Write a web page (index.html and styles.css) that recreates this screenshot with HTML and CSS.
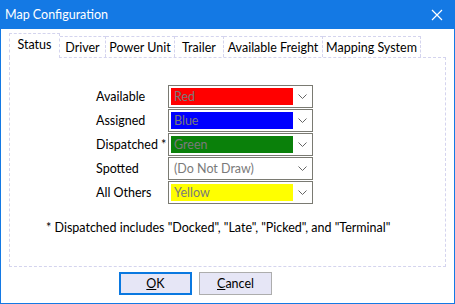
FILE: index.html
```html
<!DOCTYPE html>
<html lang="en">
<head>
    <meta charset="UTF-8">
    <title>Map Configuration</title>
    <link rel="stylesheet" href="styles.css">
</head>
<body>

<div class="window">
    <div class="titlebar">
        <span class="title">Map Configuration</span>
        <span class="close">
            <svg width="12" height="12" viewBox="0 0 12 12"><path d="M1 1 L11 11 M11 1 L1 11" stroke="#fff" stroke-width="1.2" fill="none"/></svg>
        </span>
    </div>

    <div class="client">
        <div class="tabs">
            <div class="tab selected tab-status">Status</div>
            <div class="tab tab-driver">Driver</div>
            <div class="tab tab-power">Power Unit</div>
            <div class="tab tab-trailer">Trailer</div>
            <div class="tab tab-freight">Available Freight</div>
            <div class="tab tab-mapping">Mapping System</div>
        </div>

        <div class="panel">
            <div class="form-grid">
                <label>Available</label>
                <div class="combo"><span class="value red">Red</span><span class="arrow"><svg width="9" height="5" viewBox="0 0 9 5"><path d="M0.5 0.5 L4.5 4.5 L8.5 0.5" stroke="#666" fill="none"/></svg></span></div>

                <label>Assigned</label>
                <div class="combo"><span class="value blue">Blue</span><span class="arrow"><svg width="9" height="5" viewBox="0 0 9 5"><path d="M0.5 0.5 L4.5 4.5 L8.5 0.5" stroke="#666" fill="none"/></svg></span></div>

                <label>Dispatched *</label>
                <div class="combo"><span class="value green">Green</span><span class="arrow"><svg width="9" height="5" viewBox="0 0 9 5"><path d="M0.5 0.5 L4.5 4.5 L8.5 0.5" stroke="#666" fill="none"/></svg></span></div>

                <label>Spotted</label>
                <div class="combo"><span class="value">(Do Not Draw)</span><span class="arrow"><svg width="9" height="5" viewBox="0 0 9 5"><path d="M0.5 0.5 L4.5 4.5 L8.5 0.5" stroke="#666" fill="none"/></svg></span></div>

                <label>All Others</label>
                <div class="combo"><span class="value yellow">Yellow</span><span class="arrow"><svg width="9" height="5" viewBox="0 0 9 5"><path d="M0.5 0.5 L4.5 4.5 L8.5 0.5" stroke="#666" fill="none"/></svg></span></div>
            </div>

            <p class="note">* Dispatched includes "Docked", "Late", "Picked", and "Terminal"</p>
        </div>

        <div class="buttons">
            <button class="btn default"><u>O</u>K</button>
            <button class="btn"><u>C</u>ancel</button>
        </div>
    </div>
</div>

</body>
</html>
```

FILE: styles.css
```css
body {
    margin: 0;
    padding: 0;
    font-family: 'Lato', 'Noto Sans', sans-serif;
    font-size: 12.5px;
    color: #000;
    background: #fff;
}

.window {
    width: 455px;
    height: 304px;
    box-sizing: border-box;
    background-color: #1479e4;
    padding: 0 1px 1px 1px;
    display: flex;
    flex-direction: column;
}

.titlebar {
    height: 29px;
    display: flex;
    align-items: center;
    justify-content: space-between;
    color: #fff;
    padding-left: 4px;
}

.title {
    font-size: 12.5px;
    margin-top: -1px;
}

.close {
    width: 34px;
    display: flex;
    justify-content: center;
    padding-top: 1px;
}

.client {
    flex: 1;
    background: #fff;
    padding: 4px 8px 0 8px;
}

/* Tabs */
.tabs {
    display: flex;
    align-items: flex-end;
    height: 24px;
    position: relative;
    z-index: 1;
}

.tab {
    box-sizing: border-box;
    height: 21px;
    border: 1px dashed #d4d4ee;
    border-bottom: none;
    border-left: none;
    text-align: center;
    line-height: 21px;
    background: #fff;
    white-space: nowrap;
}

.tab.selected {
    height: 25px;
    border-left: 1px dashed #d4d4ee;
    line-height: 21px;
    margin-bottom: -1px;
}

.tab-status { width: 51px; }
.tab-driver { width: 46px; }
.tab-power { width: 69px; }
.tab-trailer { width: 49px; }
.tab-freight { width: 99px; }
.tab-mapping { width: 98px; }

.panel {
    box-sizing: border-box;
    width: 437px;
    height: 210px;
    border: 1px dashed #d4d4ee;
    padding: 27px 0 0 37px;
}

.form-grid {
    display: grid;
    grid-template-columns: 49px 72px 145px;
    grid-auto-rows: 23px;
    row-gap: 1px;
}

.form-grid label {
    grid-column: 2;
    display: flex;
    align-items: center;
    white-space: nowrap;
}

.combo {
    grid-column: 3;
    box-sizing: border-box;
    border: 1px solid #7a7a72;
    padding: 2px;
    display: flex;
    align-items: stretch;
}

.value {
    width: 122px;
    color: #7a7a7a;
    line-height: 17px;
    padding-left: 3px;
    box-sizing: border-box;
}

.value.red { background: #ff0000; }
.value.blue { background: #0000ff; }
.value.green { background: #0a800a; }
.value.yellow { background: #ffff00; }

.arrow {
    flex: 1;
    display: flex;
    align-items: center;
    justify-content: center;
    padding-left: 1px;
}

.note {
    margin: 16px 0 0 -1px;
    white-space: nowrap;
}

/* Buttons */
.buttons {
    display: flex;
    gap: 7px;
    padding: 5px 0 0 110px;
}

.btn {
    box-sizing: border-box;
    width: 73px;
    height: 23px;
    font-family: inherit;
    font-size: 12.5px;
    color: #000;
    background: #e6e6f6;
    border: 1px solid #adadad;
    padding: 0;
}

.btn.default {
    border: 2px solid #0a78e0;
}
```
